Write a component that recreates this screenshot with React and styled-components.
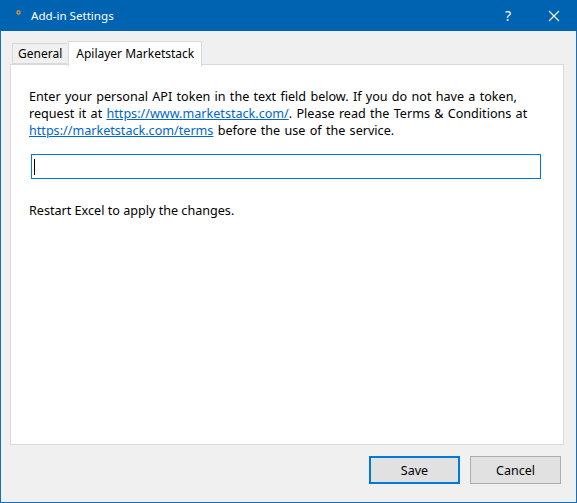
import React from "react";
import styled, { createGlobalStyle } from "styled-components";

const Global = createGlobalStyle`
  html, body { margin: 0; padding: 0; background: #f0f0f0; }
  #root { width: 577px; height: 503px; }
  * { box-sizing: border-box; }
`;

const FONT = `"Noto Sans", "Open Sans", "DejaVu Sans", sans-serif`;

const Window = styled.div`
  width: 577px;
  height: 503px;
  display: flex;
  flex-direction: column;
  border: 1px solid #1170c4;
  border-top: none;
  background: #f0f0f0;
  font-family: ${FONT};
  font-size: 12px;
  color: #000;
`;

const TitleBar = styled.div`
  height: 31px;
  margin: 0 -1px;
  background: #0063b1;
  display: flex;
  align-items: center;
  color: #fff;
  flex-shrink: 0;
`;

const AppIcon = styled.div`
  width: 31px;
  height: 31px;
  display: flex;
  align-items: center;
  justify-content: center;
`;

const Title = styled.div`
  flex: 1;
  font-size: 11.6px;
`;

const TitleButton = styled.div`
  width: 46px;
  height: 31px;
  display: flex;
  align-items: center;
  justify-content: center;
  font-size: 14px;
`;

const Body = styled.div`
  flex: 1;
  display: flex;
  flex-direction: column;
  padding: 10px 12px 0 9px;
`;

const TabRow = styled.div`
  display: flex;
  align-items: flex-end;
  height: 23px;
  padding-left: 2px;
  position: relative;
  z-index: 1;
`;

const Tab = styled.div`
  height: ${(p) => (p.$active ? "25px" : "21px")};
  margin-bottom: ${(p) => (p.$active ? "-2px" : "0")};
  margin-left: ${(p) => (p.$active ? "1px" : "0")};
  padding: ${(p) => (p.$active ? "3px 7px 0 7px" : "1px 5px 0 5px")};
  background: ${(p) => (p.$active ? "#fff" : "#f0f0f0")};
  border: 1px solid #d9d9d9;
  border-bottom: ${(p) => (p.$active ? "none" : "1px solid #d9d9d9")};
  ${(p) => (!p.$active ? "border-right: none;" : "")}
  font-size: 12px;
  line-height: 17px;
  white-space: nowrap;
`;

const Panel = styled.div`
  height: 381px;
  background: #fff;
  border: 1px solid #d9d9d9;
  padding: 23px 18px 0 18px;
  display: flex;
  flex-direction: column;
`;

const Paragraph = styled.p`
  margin: 0;
  max-width: 515px;
  font-size: 12.6px;
  line-height: 17px;
  word-spacing: 1px;
`;

const Link = styled.a`
  color: #0066cc;
  text-decoration: underline;
`;

const TokenField = styled.div`
  margin: 15px 0 0 2px;
  width: 510px;
  height: 25px;
  border: 1px solid #0078d7;
  background: #fff;
  display: flex;
  align-items: center;
  padding-left: 2px;
`;

const Caret = styled.span`
  width: 1px;
  height: 16px;
  background: #000;
`;

const Note = styled(Paragraph)`
  margin-top: 23px;
  word-spacing: 0;
`;

const Footer = styled.div`
  display: flex;
  justify-content: flex-end;
  gap: 10px;
  padding: 11px 3px 0 0;
`;

const Button = styled.button`
  width: 91px;
  height: 28px;
  font-family: ${FONT};
  font-size: 12.5px;
  color: #000;
  background: #e1e1e1;
  border: ${(p) => (p.$default ? "2px solid #0078d7" : "1px solid #adadad")};
  padding: 0;
  margin: 0;
`;

export default function App() {
  return (
    <>
      <Global />
      <Window>
        <TitleBar>
          <AppIcon>
            <svg width="16" height="16" viewBox="0 0 16 16">
              <line x1="2" y1="14" x2="9" y2="6" stroke="#1a5a96" strokeWidth="1" />
              <circle cx="10.5" cy="4.5" r="1.6" fill="none" stroke="#f39a1e" strokeWidth="1.2" />
            </svg>
          </AppIcon>
          <Title>Add-in Settings</Title>
          <TitleButton>?</TitleButton>
          <TitleButton>
            <svg width="12" height="12" viewBox="0 0 12 12">
              <path d="M1 1 L11 11 M11 1 L1 11" stroke="#fff" strokeWidth="1.1" />
            </svg>
          </TitleButton>
        </TitleBar>
        <Body>
          <TabRow>
            <Tab>General</Tab>
            <Tab $active>Apilayer Marketstack</Tab>
          </TabRow>
          <Panel>
            <Paragraph>
              Enter your personal API token in the text field below. If you do not have a token,
              request it at <Link>https://www.marketstack.com/</Link>. Please read the Terms &amp; Conditions at{" "}
              <Link>https://marketstack.com/terms</Link> before the use of the service.
            </Paragraph>
            <TokenField>
              <Caret />
            </TokenField>
            <Note>Restart Excel to apply the changes.</Note>
          </Panel>
          <Footer>
            <Button $default>Save</Button>
            <Button>Cancel</Button>
          </Footer>
        </Body>
      </Window>
    </>
  );
}
